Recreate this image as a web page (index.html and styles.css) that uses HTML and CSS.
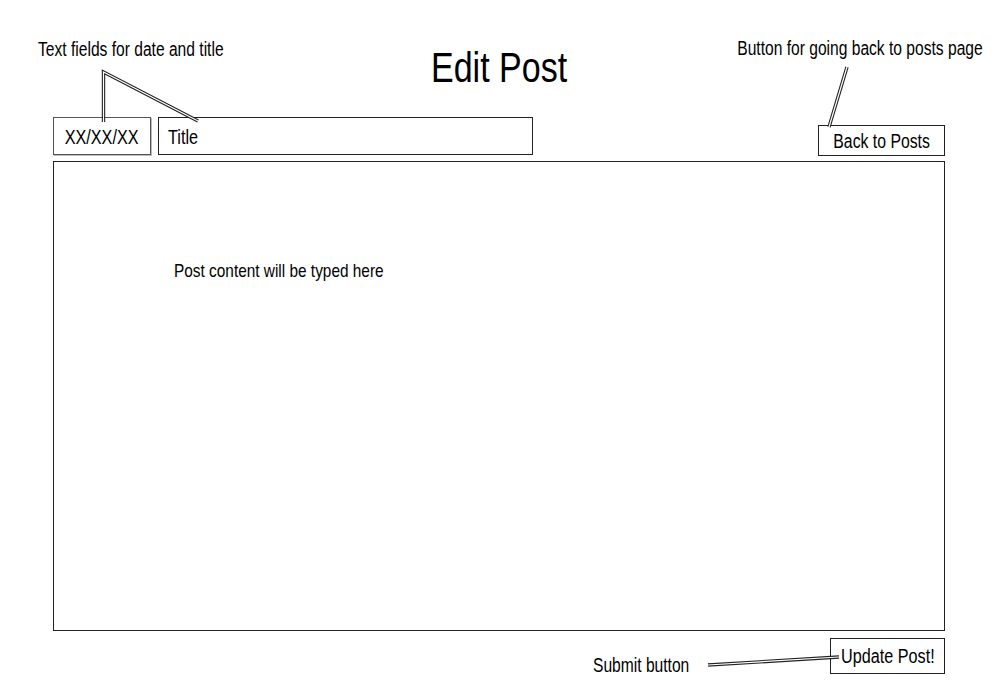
FILE: index.html
```html
<!DOCTYPE html>
<html>
<head>
<meta charset="utf-8">
<link rel="stylesheet" href="styles.css">
</head>
<body>
<div class="page">
  <h1 class="title"><span class="t c">Edit Post</span></h1>
  <div class="fields">
    <div class="box date"><span class="t c">XX/XX/XX</span></div>
    <div class="box title-field"><span class="t">Title</span></div>
    <div class="spacer"></div>
    <div class="box back"><span class="t c">Back to Posts</span></div>
  </div>
  <div class="content"><span class="t">Post content will be typed here</span></div>
  <div class="actions">
    <div class="box update"><span class="t c">Update Post!</span></div>
  </div>

  <div class="note note-fields"><span class="t n">Text fields for date and title</span></div>
  <div class="note note-back"><span class="t n r">Button for going back to posts page</span></div>
  <div class="note note-submit"><span class="t n">Submit button</span></div>

  <svg class="arrows" width="1000" height="700" viewBox="0 0 1000 700">
    <g class="outer">
      <polyline points="103.5,122 103.5,72 198,121"/>
      <line x1="847" y1="67" x2="829" y2="127"/>
      <line x1="708" y1="665" x2="839" y2="657"/>
    </g>
    <g class="inner">
      <polyline points="103.5,122 103.5,72 198,121"/>
      <line x1="847" y1="67" x2="829" y2="127"/>
      <line x1="708" y1="665" x2="839" y2="657"/>
    </g>
  </svg>
</div>
</body>
</html>
```
FILE: styles.css
```css
html, body {
  margin: 0;
  padding: 0;
  background: #fff;
}
body {
  font-family: "Liberation Sans Narrow", "Arial Narrow", "Liberation Sans", Arial, sans-serif;
  color: #000;
}
.page {
  position: relative;
  width: 1000px;
  height: 700px;
  box-sizing: border-box;
  padding: 0 55px 0 53px;
  overflow: hidden;
}
/* condensed text: Arial Narrow look */
.t {
  display: inline-block;
  white-space: nowrap;
  transform: scaleX(0.81);
  transform-origin: left center;
}
.t.c {
  transform-origin: center center;
}
.t.n {
  transform: scaleX(0.78);
}
.t.r {
  transform-origin: right center;
}
.title {
  margin: 0 0 28px 0;
  padding-top: 47px;
  font-size: 42px;
  line-height: 42px;
  font-weight: normal;
  text-align: center;
}
.fields {
  display: flex;
  align-items: flex-end;
  gap: 7px;
  height: 39px;
}
.box {
  box-sizing: border-box;
  border: 1px solid #222;
  font-size: 20px;
  line-height: 23px;
  display: flex;
  align-items: center;
  background: #fff;
}
.date {
  width: 98px;
  height: 38px;
  justify-content: center;
  border-color: #555;
  box-shadow: 1px 1px 0 #bbb;
  margin-bottom: 1px;
  padding-top: 2px;
}
.title-field {
  width: 375px;
  height: 38px;
  padding-left: 9px;
  padding-top: 2px;
  margin-bottom: 1px;
}
.spacer {
  flex: 1;
}
.back {
  width: 127px;
  height: 31px;
  justify-content: center;
  padding-top: 2px;
  font-size: 19.5px;
}
.content {
  box-sizing: border-box;
  margin-top: 5px;
  height: 470px;
  border: 1px solid #222;
  padding: 98px 0 0 120px;
  font-size: 19px;
  line-height: 22px;
}
.actions {
  display: flex;
  justify-content: flex-end;
  margin-top: 7px;
}
.update {
  width: 115px;
  height: 36px;
  justify-content: center;
}
.note {
  position: absolute;
  font-size: 20px;
  line-height: 22px;
  white-space: nowrap;
}
.note-fields {
  left: 38px;
  top: 38px;
}
.note-back {
  right: 17px;
  top: 37px;
}
.note-submit {
  left: 593px;
  top: 654px;
}
.arrows {
  position: absolute;
  left: 0;
  top: 0;
  pointer-events: none;
}
.arrows .outer {
  fill: none;
  stroke: #222;
  stroke-width: 3.4;
  stroke-linejoin: miter;
}
.arrows .inner {
  fill: none;
  stroke: #fff;
  stroke-width: 1.2;
  stroke-linejoin: miter;
}
```
